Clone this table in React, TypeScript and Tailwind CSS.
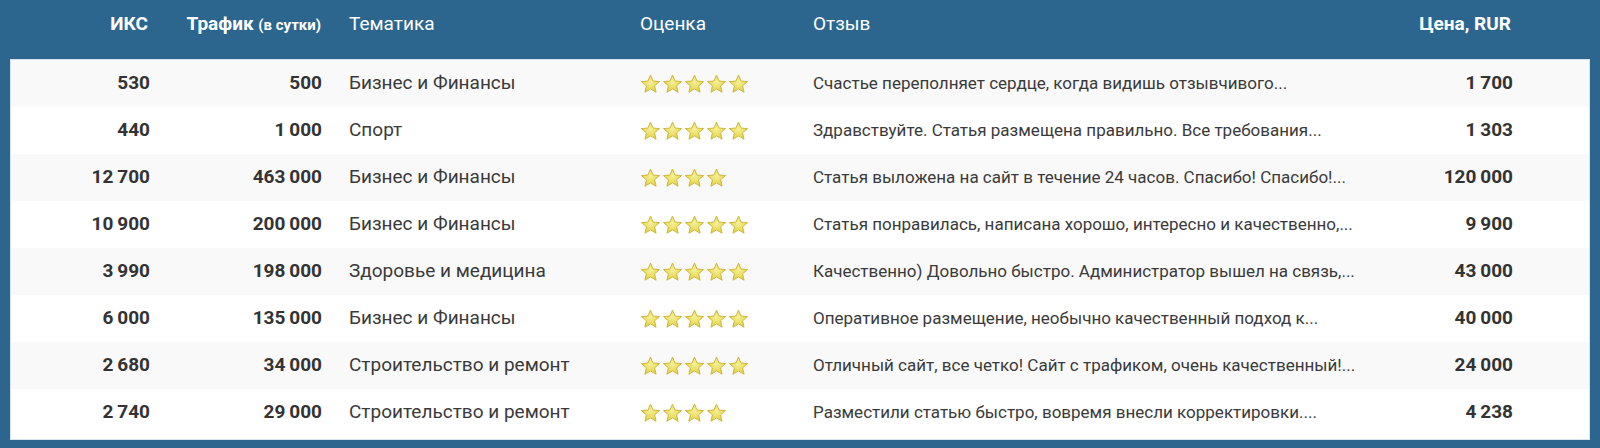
import React from "react";

const rows = [
  { iks: "530", traffic: "500", theme: "Бизнес и Финансы", stars: 5, review: "Счастье переполняет сердце, когда видишь отзывчивого...", price: "1\u2009700" },
  { iks: "440", traffic: "1\u2009000", theme: "Спорт", stars: 5, review: "Здравствуйте. Статья размещена правильно. Все требования...", price: "1\u2009303" },
  { iks: "12\u2009700", traffic: "463\u2009000", theme: "Бизнес и Финансы", stars: 4, review: "Статья выложена на сайт в течение 24 часов. Спасибо! Спасибо!...", price: "120\u2009000" },
  { iks: "10\u2009900", traffic: "200\u2009000", theme: "Бизнес и Финансы", stars: 5, review: "Статья понравилась, написана хорошо, интересно и качественно,...", price: "9\u2009900" },
  { iks: "3\u2009990", traffic: "198\u2009000", theme: "Здоровье и медицина", stars: 5, review: "Качественно) Довольно быстро. Администратор вышел на связь,...", price: "43\u2009000" },
  { iks: "6\u2009000", traffic: "135\u2009000", theme: "Бизнес и Финансы", stars: 5, review: "Оперативное размещение, необычно качественный подход к...", price: "40\u2009000" },
  { iks: "2\u2009680", traffic: "34\u2009000", theme: "Строительство и ремонт", stars: 5, review: "Отличный сайт, все четко! Сайт с трафиком, очень качественный!...", price: "24\u2009000" },
  { iks: "2\u2009740", traffic: "29\u2009000", theme: "Строительство и ремонт", stars: 4, review: "Разместили статью быстро, вовремя внесли корректировки....", price: "4\u2009238" },
];

function Star() {
  return (
    <svg width="21" height="20" viewBox="0 0 24 23" className="shrink-0">
      <defs>
        <radialGradient id="sg" cx="50%" cy="40%" r="60%">
          <stop offset="0%" stopColor="#f6f09a" />
          <stop offset="100%" stopColor="#e2d23c" />
        </radialGradient>
      </defs>
      <path
        d="M12 1.2 L14.9 8.1 L22.4 8.7 L16.7 13.6 L18.4 21 L12 17.1 L5.6 21 L7.3 13.6 L1.6 8.7 L9.1 8.1 Z"
        fill="url(#sg)"
        stroke="#cdb53a"
        strokeWidth="1.1"
        strokeLinejoin="round"
      />
    </svg>
  );
}

const grid = "grid grid-cols-[150px_173px_295px_173px_599px_191px]";

export default function App() {
  return (
    <div
      className="w-[1600px] h-[448px] bg-[#2c668f] px-[10px] overflow-hidden"
      style={{ fontFamily: "Roboto, 'Liberation Sans', sans-serif" }}
    >
      <div className={`${grid} h-[59px] items-center text-white text-[19px] pb-[10px]`}>
        <div className="text-right pr-[12px] font-bold">ИКС</div>
        <div className="text-right pr-[12px] font-bold">
          Трафик <span className="text-[15px]">(в сутки)</span>
        </div>
        <div className="pl-[16px]">Тематика</div>
        <div className="pl-[12px]">Оценка</div>
        <div className="pl-[12px]">Отзыв</div>
        <div className="text-right pr-[80px] font-bold">Цена, RUR</div>
      </div>
      <div className="bg-white border border-[#d6e2ec] pb-[3px]">
        {rows.map((r, i) => (
          <div
            key={i}
            className={`${grid} h-[47px] items-center text-[#333333] ${i % 2 === 0 ? "bg-[#f9f9f9]" : "bg-white"}`}
          >
            <div className="text-right pr-[11px] font-bold text-[19px]">{r.iks}</div>
            <div className="text-right pr-[12px] font-bold text-[19px]">{r.traffic}</div>
            <div className="pl-[15px] text-[19px] text-[#3a3a3a]">{r.theme}</div>
            <div className="pl-[11px] flex gap-[1px]">
              {Array.from({ length: r.stars }).map((_, k) => (
                <Star key={k} />
              ))}
            </div>
            <div className="pl-[11px] text-[17px] whitespace-nowrap text-[#3a3a3a]">{r.review}</div>
            <div className="text-right pr-[79px] font-bold text-[19px]">{r.price}</div>
          </div>
        ))}
      </div>
    </div>
  );
}
